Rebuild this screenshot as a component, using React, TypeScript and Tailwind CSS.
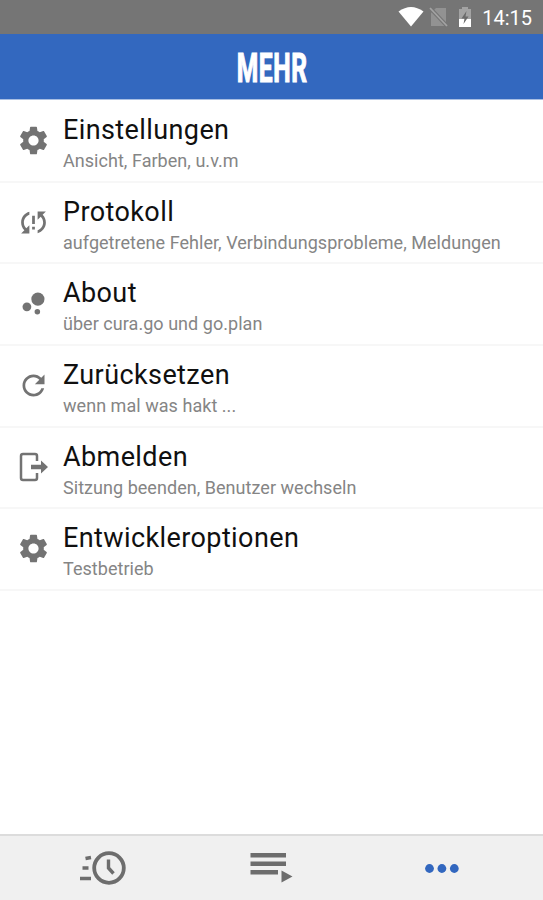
import type { ReactNode } from 'react';

const GearIcon = () => (
  <svg viewBox="0 0 24 24" className="h-[33px] w-[33px]" fill="currentColor">
    <path d="M19.43 12.98c.04-.32.07-.64.07-.98s-.03-.66-.07-.98l2.11-1.65c.19-.15.24-.42.12-.64l-2-3.46c-.12-.22-.39-.3-.61-.22l-2.49 1c-.52-.4-1.08-.73-1.69-.98l-.38-2.65C14.46 2.18 14.25 2 14 2h-4c-.25 0-.46.18-.49.42l-.38 2.65c-.61.25-1.17.59-1.69.98l-2.49-1c-.23-.09-.49 0-.61.22l-2 3.46c-.13.22-.07.49.12.64l2.11 1.65c-.04.32-.07.65-.07.98s.03.66.07.98l-2.11 1.65c-.19.15-.24.42-.12.64l2 3.46c.12.22.39.3.61.22l2.49-1c.52.4 1.08.73 1.69.98l.38 2.65c.03.24.24.42.49.42h4c.25 0 .46-.18.49-.42l.38-2.65c.61-.25 1.17-.59 1.69-.98l2.49 1c.23.09.49 0 .61-.22l2-3.46c.12-.22.07-.49-.12-.64l-2.11-1.65zM12 15.700c-2.04 0-3.7-1.66-3.7-3.7s1.66-3.7 3.7-3.7 3.7 1.66 3.7 3.7-1.66 3.7-3.7 3.7z" />
  </svg>
);

const SyncProblemIcon = () => (
  <svg viewBox="0 0 24 24" className="h-[33px] w-[33px]" fill="currentColor">
    <path d="M3 12c0 2.21.91 4.2 2.36 5.64L3 20h6v-6l-2.24 2.24C5.68 15.15 5 13.66 5 12c0-2.61 1.67-4.83 4-5.65V4.26C5.55 5.15 3 8.27 3 12zm8 5h2v-2h-2v2zM21 4h-6v6l2.24-2.24C18.32 8.85 19 10.34 19 12c0 2.61-1.67 4.83-4 5.65v2.09c3.45-.89 6-4.01 6-7.74 0-2.21-.91-4.2-2.36-5.64L21 4zm-10 9h2V7h-2v6z" />
  </svg>
);

const BubblesIcon = () => (
  <svg viewBox="0 0 24 24" className="h-[33px] w-[33px]" fill="currentColor">
    <circle cx="7.2" cy="14.4" r="3.2" />
    <circle cx="14.8" cy="18" r="2" />
    <circle cx="15.2" cy="8.8" r="4.8" />
  </svg>
);

const RefreshIcon = () => (
  <svg viewBox="0 0 24 24" className="h-[33px] w-[33px]" fill="currentColor">
    <path d="M17.65 6.35C16.2 4.9 14.21 4 12 4c-4.42 0-7.99 3.58-7.99 8s3.57 8 7.99 8c3.73 0 6.84-2.55 7.73-6h-2.08c-.82 2.33-3.04 4-5.65 4-3.31 0-6-2.69-6-6s2.69-6 6-6c1.66 0 3.14.69 4.22 1.78L13 11h7V4l-2.35 2.35z" />
  </svg>
);

const LogoutIcon = () => (
  <svg viewBox="0 0 33 33" className="h-[33px] w-[33px]">
    <path d="M20 10V5Q20 3 18 3H6Q4 3 4 5V27Q4 29 6 29H18Q20 29 20 27V22" fill="none" stroke="currentColor" strokeWidth="2.500" />
    <path d="M14 13.700H24V9.500L31 16L24 22.500V18.300H14Z" fill="currentColor" />
  </svg>
);

type Entry = { title: string; text: string; icon: ReactNode };

const entries: Entry[] = [
  { title: 'Einstellungen', text: 'Ansicht, Farben, u.v.m', icon: <GearIcon /> },
  { title: 'Protokoll', text: 'aufgetretene Fehler, Verbindungsprobleme, Meldungen', icon: <SyncProblemIcon /> },
  { title: 'About', text: 'über cura.go und go.plan', icon: <BubblesIcon /> },
  { title: 'Zurücksetzen', text: 'wenn mal was hakt ...', icon: <RefreshIcon /> },
  { title: 'Abmelden', text: 'Sitzung beenden, Benutzer wechseln', icon: <LogoutIcon /> },
  { title: 'Entwickleroptionen', text: 'Testbetrieb', icon: <GearIcon /> },
];

function StatusBar() {
  return (
    <div className="flex h-[34px] shrink-0 items-center justify-end bg-[#757575] pr-[11px] text-white">
      <svg viewBox="0 0 26 20" className="h-5 w-[26px]" fill="currentColor">
        <path d="M.5 4.500Q13-4.500 25.500 4.500L13 19.500Z" />
      </svg>
      <svg viewBox="0 0 20 22" className="ml-[5px] h-[22px] w-5">
        <path d="M7 2H17V20H2V7Z" fill="#929292" />
        <path d="M1 2L18 20" stroke="#757575" strokeWidth="4" />
        <path d="M1 2L18 20" stroke="#a3a3a3" strokeWidth="1.800" />
      </svg>
      <svg viewBox="0 0 14 20" className="ml-[9px] h-5 w-[14px]">
        <path d="M1 2H4V0H10V2H13V12H1Z" fill="#a3a3a3" />
        <path d="M1 12H13V20H1Z" fill="#fff" />
        <path d="M8.500 4L3.500 11.500H6.500L5.500 17L10.500 9.500H7.500Z" fill="#6b6b6b" />
      </svg>
      <span className="mt-[2px] ml-[10px] text-[20px] leading-none">14:15</span>
    </div>
  );
}

function MenuRow({ title, text, icon }: Entry) {
  return (
    <li className="flex h-[81.7px] border-b-2 border-[#f7f7f7] pl-[17px]">
      <div className="mt-[23px] text-[#737373]">{icon}</div>
      <div className="ml-[13px] pt-[13px] whitespace-nowrap">
        <div className="text-[27px] leading-[32px] tracking-[0.4px] text-[#101010]">{title}</div>
        <div className="mt-[4px] text-[18px] leading-[21px] tracking-[0.04px] text-[#858585]">{text}</div>
      </div>
    </li>
  );
}

function TabBar() {
  return (
    <nav className="grid h-[66px] shrink-0 grid-cols-3 border-t-2 border-[#dcdcdc] bg-[#f0f0f0] text-[#6d6d6d]">
      <button className="flex items-center pl-[78px]">
        <svg viewBox="0 0 48 36" className="h-9 w-12" fill="none" stroke="currentColor" strokeWidth="3.800">
          <circle cx="31" cy="18" r="14.800" />
          <path d="M30.500 9.500V18L35.500 23.500" strokeWidth="3.400" />
          <path d="M7.500 8.500L13 7.500M4.500 18H10.500M2 28.500H13" strokeWidth="3.600" />
        </svg>
      </button>
      <button className="flex items-center pl-[69px]">
        <svg viewBox="0 0 44 30" className="h-[30px] w-11" fill="currentColor">
          <path d="M.5 0H36V4.500H.5ZM.5 8.500H36V13H.5ZM.5 17H28V21.500H.5ZM31.500 17.500L42.500 23.500L31.500 29.500Z" />
        </svg>
      </button>
      <button className="flex items-center pl-[63px] text-[#3267bf]">
        <svg viewBox="0 0 36 10" className="h-[10px] w-9" fill="currentColor">
          <circle cx="4.500" cy="5.500" r="4.400" />
          <circle cx="16.900" cy="5.500" r="4.400" />
          <circle cx="29.300" cy="5.500" r="4.400" />
        </svg>
      </button>
    </nav>
  );
}

export default function App() {
  return (
    <div className="flex h-[900px] w-[543px] flex-col overflow-hidden bg-white font-['Roboto',sans-serif]">
      <StatusBar />
      <header className="flex h-[66px] shrink-0 items-center justify-center border-b border-[#a9bfe3] bg-[#3368bf] pt-[3px]">
        <h1 className="ml-[2px] scale-x-[0.6] text-[41px] leading-none font-bold tracking-[1px] text-white [-webkit-text-stroke:1.2px_white]">MEHR</h1>
      </header>
      <ul className="grow pt-[0.9px]">
        {entries.map((entry) => (
          <MenuRow key={entry.title} {...entry} />
        ))}
      </ul>
      <TabBar />
    </div>
  );
}
